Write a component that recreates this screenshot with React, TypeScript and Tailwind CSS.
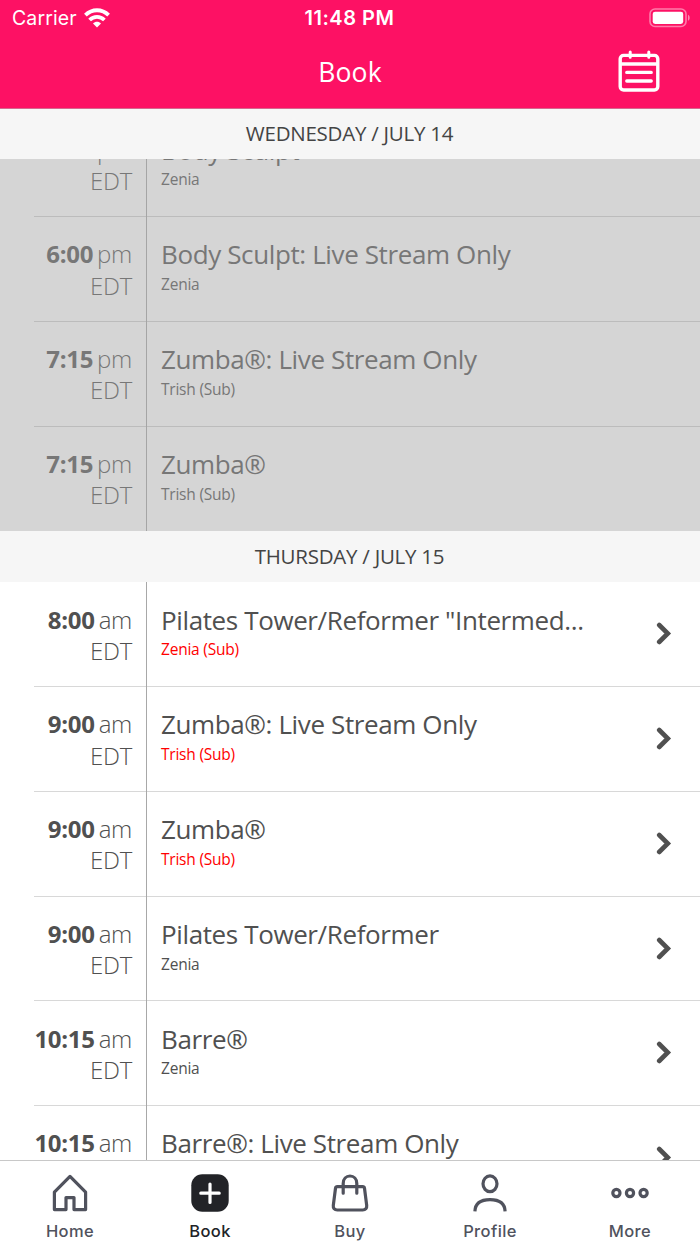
import React from "react";
import { clsx } from "clsx";

type ClassItem = {
  time: string;
  period: string;
  title: string;
  teacher: string;
  sub?: boolean;
};

const wednesday: ClassItem[] = [
  { time: "6:00", period: "pm", title: "Body Sculpt", teacher: "Zenia" },
  { time: "6:00", period: "pm", title: "Body Sculpt: Live Stream Only", teacher: "Zenia" },
  { time: "7:15", period: "pm", title: "Zumba®: Live Stream Only", teacher: "Trish (Sub)", sub: true },
  { time: "7:15", period: "pm", title: "Zumba®", teacher: "Trish (Sub)", sub: true },
];

const thursday: ClassItem[] = [
  { time: "8:00", period: "am", title: 'Pilates Tower/Reformer "Intermed...', teacher: "Zenia (Sub)", sub: true },
  { time: "9:00", period: "am", title: "Zumba®: Live Stream Only", teacher: "Trish (Sub)", sub: true },
  { time: "9:00", period: "am", title: "Zumba®", teacher: "Trish (Sub)", sub: true },
  { time: "9:00", period: "am", title: "Pilates Tower/Reformer", teacher: "Zenia" },
  { time: "10:15", period: "am", title: "Barre®", teacher: "Zenia" },
  { time: "10:15", period: "am", title: "Barre®: Live Stream Only", teacher: "Zenia" },
];

const WifiIcon = () => (
  <svg width="26" height="20" viewBox="0 0 26 20" fill="none" stroke="#fff" strokeWidth="3.8">
    <path d="M1.4 7.2C8 .6 18 .6 24.6 7.2" />
    <path d="M5.6 12c4.2-4.2 10.6-4.2 14.8 0" />
    <path d="M13 19.4l-4-4c2.2-2.1 5.8-2.1 8 0z" fill="#fff" stroke="none" />
  </svg>
);

const BatteryIcon = () => (
  <svg width="42" height="20" viewBox="0 0 42 20" fill="none">
    <rect x="1" y="1" width="36" height="17.5" rx="5" stroke="#fff" strokeOpacity="0.45" strokeWidth="1.6" />
    <rect x="3.7" y="3.7" width="30.5" height="12.2" rx="2.4" fill="#fff" />
    <path d="M39 6.8c2.2 1 2.2 5 0 6z" fill="#fff" fillOpacity="0.5" />
  </svg>
);

const CalendarIcon = () => (
  <svg width="42" height="42" viewBox="0 0 42 42" fill="none" stroke="#fff" strokeWidth="3.4" strokeLinecap="round">
    <rect x="2.2" y="5.4" width="37.6" height="34.6" rx="3.4" />
    <path d="M2.2 14H39.8" strokeLinecap="butt" />
    <path d="M12.2 2v5.2M30.8 2v5.2" strokeWidth="3" />
    <path d="M8.8 22.4h24.4M8.8 31h24.4" />
  </svg>
);

const HomeIcon = () => (
  <svg width="38" height="38" viewBox="0 0 38 38" fill="none" stroke="#50525d" strokeWidth="3.2" strokeLinejoin="round">
    <path d="M3.4 35.6V18.2L19 2.4l15.6 15.8v17.4H23V23.6h-8v12z" />
  </svg>
);

const BookIcon = () => (
  <svg width="38" height="38" viewBox="0 0 38 38" fill="none">
    <rect x="0.3" y="0.3" width="37.4" height="37.4" rx="11" fill="#222327" />
    <path d="M19 10v18.4M9.8 19.2h18.4" stroke="#fff" strokeWidth="3.2" strokeLinecap="round" />
  </svg>
);

const BagIcon = () => (
  <svg width="38" height="38" viewBox="0 0 38 38" fill="none" stroke="#50525d" strokeWidth="3.2" strokeLinecap="round" strokeLinejoin="round">
    <path d="M6.3 12.7h25.4c1 0 1.6.5 1.8 1.5l2.2 17.2c.3 2.8-1.2 4.6-4 4.6H6.3c-2.8 0-4.3-1.8-4-4.6l2.2-17.2c.2-1 .8-1.5 1.8-1.5z" />
    <path d="M12.2 19.2V9.4C12.2 5 15.2 2 19 2s6.8 3 6.8 7.4v9.8" />
  </svg>
);

const ProfileIcon = () => (
  <svg width="38" height="38" viewBox="0 0 38 38" fill="none" stroke="#50525d" strokeWidth="3.2">
    <ellipse cx="19" cy="9.8" rx="7" ry="7.9" />
    <path d="M3.9 37.4C4.2 29.2 9 25.6 19 25.6s14.8 3.6 15.1 11.8" />
  </svg>
);

const MoreIcon = () => (
  <svg width="38" height="38" viewBox="0 0 38 38" fill="none" stroke="#50525d" strokeWidth="3.2">
    <circle cx="5.4" cy="19" r="3.6" />
    <circle cx="19" cy="19" r="3.6" />
    <circle cx="32.6" cy="19" r="3.6" />
  </svg>
);

const tabs = [
  { label: "Home", icon: <HomeIcon /> },
  { label: "Book", icon: <BookIcon />, active: true },
  { label: "Buy", icon: <BagIcon /> },
  { label: "Profile", icon: <ProfileIcon /> },
  { label: "More", icon: <MoreIcon /> },
];

const DayHeader = ({ children }: { children: React.ReactNode }) => (
  <h2 className="flex h-[51px] shrink-0 items-center justify-center bg-[#f6f6f6] pr-px pb-px text-[20.5px] leading-none tracking-[-0.25px] text-[#444]">
    {children}
  </h2>
);

const ClassRow = ({ item, past }: { item: ClassItem; past?: boolean }) => (
  <div
    className={clsx(
      "ml-[34px] flex h-[104.75px] shrink-0 border-b last:border-b-0",
      past ? "border-[#bcbcbc] text-[#777]" : "border-[#d8d8d8] text-[#505050]"
    )}
  >
    <div
      className={clsx(
        "-mb-px w-[113px] shrink-0 border-r pt-[21.25px] pr-[14px] text-right text-[24px] leading-[31.4px] tracking-[-0.3px] whitespace-nowrap",
        past ? "border-[#a5a5a5]" : "border-[#a8a8a8]"
      )}
    >
      <div className="-ml-4 flex justify-end gap-1">
        <span className="font-bold">{item.time}</span>
        <span className="font-light">{item.period}</span>
      </div>
      <div className="font-light">EDT</div>
    </div>
    <div className="flex-1 pt-[19.4px] pl-[14px]">
      <h3 className="text-[26px] leading-9 tracking-[-0.38px] whitespace-nowrap">{item.title}</h3>
      <p className={clsx("mt-[1.8px] text-[15.5px] leading-5 tracking-[-0.22px]", item.sub && !past && "text-[#f00]")}>
        {item.teacher}
      </p>
    </div>
    {!past && (
      <svg className="mt-[40px] mr-[28px] shrink-0" width="16" height="23" viewBox="0 0 16 23" fill="none">
        <path d="M3.2 3l8.6 8.5L3.2 20" stroke="#505050" strokeWidth="4.6" strokeLinecap="round" />
      </svg>
    )}
  </div>
);

const App = () => (
  <div className="flex h-[1244px] w-[700px] flex-col overflow-hidden bg-white font-['Open_Sans',sans-serif]">
    <header className="relative z-10 -mb-px h-[109px] shrink-0 border-b border-[#d5688e] bg-[#fd1164] text-white">
      <div className="grid h-9 grid-cols-3 items-center pr-[9px] pl-3 font-['Inter',sans-serif] text-[19.5px]">
        <div className="flex items-center gap-[7px]">
          <span className="pt-[2px] tracking-[0.1px]">Carrier</span>
          <WifiIcon />
        </div>
        <span className="-ml-1 text-center text-[20px] font-semibold tracking-[0.5px]">11:48 PM</span>
        <div className="-mt-px flex justify-end">
          <BatteryIcon />
        </div>
      </div>
      <div className="grid h-[70px] grid-cols-3 items-center pr-10">
        <h1 className="col-start-2 pt-[3px] pl-10 text-center text-[26.5px] tracking-[0.2px]">Book</h1>
        <div className="flex justify-end">
          <CalendarIcon />
        </div>
      </div>
    </header>

    <main className="flex min-h-0 flex-1 flex-col overflow-hidden">
      <DayHeader>WEDNESDAY / JULY 14</DayHeader>
      {/* Scrolled list, the first class sits partly behind the day header */}
      <div className="flex h-[372.25px] shrink-0 flex-col justify-end overflow-hidden bg-[#d5d5d5]">
        {wednesday.map((item, idx) => (
          <ClassRow key={idx} item={item} past />
        ))}
      </div>
      <DayHeader>THURSDAY / JULY 15</DayHeader>
      <div>
        {thursday.map((item, idx) => (
          <ClassRow key={idx} item={item} />
        ))}
      </div>
    </main>

    <nav className="grid h-[84px] shrink-0 grid-cols-5 border-t border-[#c8c8c8] bg-white font-['Inter',sans-serif]">
      {tabs.map((tab) => (
        <div key={tab.label} className="flex flex-col items-center pt-[13px]">
          {tab.icon}
          <span
            className={clsx(
              "mt-[7px] text-[16.5px] leading-6 font-medium tracking-[0.4px]",
              tab.active ? "text-[#222327]" : "text-[#50525d]"
            )}
          >
            {tab.label}
          </span>
        </div>
      ))}
    </nav>
  </div>
);

export default App;
